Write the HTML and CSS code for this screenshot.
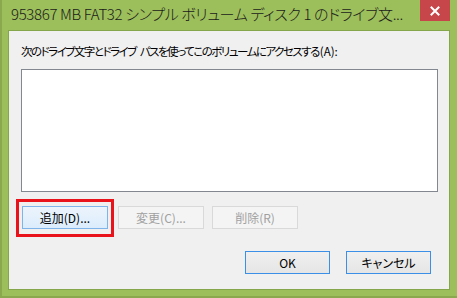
FILE: index.html
```html
<!DOCTYPE html>
<html lang="ja">
<head>
<meta charset="utf-8">
<link rel="stylesheet" href="styles.css">
</head>
<body>
<div class="window">
  <div class="titlebar">
    <span class="title">953867 MB FAT32 シンプル ボリューム ディスク 1 のドライブ文...</span>
    <div class="close"><svg width="10" height="10" viewBox="0 0 10 10"><path d="M1.5 1.5 L8.5 8.5 M8.5 1.5 L1.5 8.5" stroke="#fff" stroke-width="2" stroke-linecap="square"/></svg></div>
  </div>
  <div class="content">
    <div class="label">次のドライブ文字とドライブ パスを使ってこのボリュームにアクセスする<span class="latin">(A):</span></div>
    <div class="listbox"></div>
    <div class="row">
      <div class="highlight"><button class="btn btn-hot">追加(D)...</button></div>
      <button class="btn btn-disabled btn-change">変更(C)...</button>
      <button class="btn btn-disabled btn-delete">削除(R)</button>
    </div>
    <div class="footer">
      <button class="btn btn-default">OK</button>
      <button class="btn btn-default">キャンセル</button>
    </div>
  </div>
</div>
</body>
</html>
```
FILE: styles.css
```css
* { box-sizing: border-box; }
html, body { margin: 0; padding: 0; }
body {
  width: 457px;
  height: 298px;
  background: #9cbe5b;
  overflow: hidden;
  font-family: "Noto Sans CJK JP", "Noto Sans", sans-serif;
}
.window {
  width: 457px;
  height: 298px;
  display: flex;
  flex-direction: column;
  border-left: 2px solid #8aa94f;
  border-bottom: 2px solid #8aa94f;
}
.titlebar {
  height: 30px;
  display: flex;
  align-items: flex-start;
  justify-content: space-between;
}
.title {
  margin: 4px 0 0 9px;
  font-size: 15px;
  font-weight: 300;
  line-height: 20px;
  letter-spacing: -0.35px;
  color: #1a1a1a;
  font-feature-settings: "palt";
  white-space: nowrap;
}
.close {
  width: 30px;
  height: 21px;
  margin-right: 7px;
  background: #c7464a;
  display: flex;
  align-items: center;
  justify-content: center;
}
.content {
  flex: 1;
  margin: 0 7px 6px 6px;
  border: 1px solid #86a64c;
  background: #f0f0f0;
  padding: 0 11px 0 12px;
  font-size: 12px;
  color: #000;
}
.label {
  padding-top: 11px;
  height: 29px;
  margin-bottom: 9px;
  font-size: 11.5px;
  line-height: 18px;
  letter-spacing: -1.5px;
  word-spacing: 3px;
  font-feature-settings: "palt";
  white-space: nowrap;
}
.latin {
  letter-spacing: 0;
  margin-left: 1px;
}
.listbox {
  height: 123px;
  background: #fff;
  border: 1px solid #828790;
}
.row {
  display: flex;
  align-items: flex-start;
  margin-top: 7px;
}
.highlight {
  margin-left: -5px;
  border: 3px solid #e8131b;
  padding: 4px 3px 5px 3px;
}
.btn {
  width: 86px;
  height: 23px;
  font-family: inherit;
  font-size: 12px;
  font-feature-settings: "palt";
  line-height: 18px;
  padding: 0;
  margin: 0;
  border: 1px solid #adadad;
  background: linear-gradient(#f0f0f0, #e5e5e5);
  color: #000;
}
.btn-hot {
  display: block;
  border-color: #7eb4ea;
  background: linear-gradient(#ecf4fc, #dcecfc);
}
.btn-disabled {
  border-color: #d9d9d9;
  background: #f4f4f4;
  color: #a0a0a0;
  margin-top: 7px;
}
.btn-change { margin-left: 4px; }
.btn-delete { margin-left: 8px; }
.footer {
  display: flex;
  justify-content: flex-end;
  gap: 16px;
  margin-top: 14px;
  padding-right: 7px;
}
.btn-default {
  width: 85px;
  border-color: #3c8fe6;
}
```
